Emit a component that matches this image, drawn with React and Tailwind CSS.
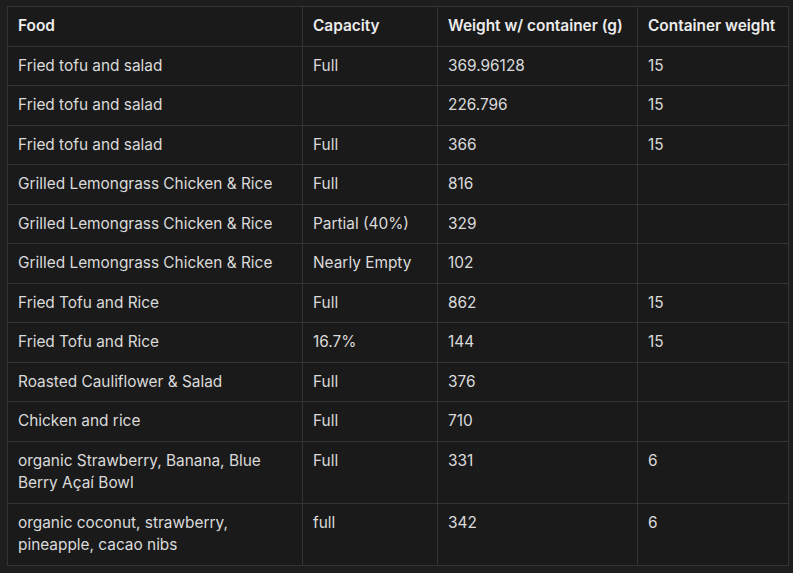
const rows = [
  ['Fried tofu and salad', 'Full', '369.96128', '15'],
  ['Fried tofu and salad', '', '226.796', '15'],
  ['Fried tofu and salad', 'Full', '366', '15'],
  ['Grilled Lemongrass Chicken & Rice', 'Full', '816', ''],
  ['Grilled Lemongrass Chicken & Rice', 'Partial (40%)', '329', ''],
  ['Grilled Lemongrass Chicken & Rice', 'Nearly Empty', '102', ''],
  ['Fried Tofu and Rice', 'Full', '862', '15'],
  ['Fried Tofu and Rice', '16.7%', '144', '15'],
  ['Roasted Cauliflower & Salad', 'Full', '376', ''],
  ['Chicken and rice', 'Full', '710', ''],
  ['organic Strawberry, Banana, Blue Berry Açaí Bowl', 'Full', '331', '6'],
  ['organic coconut, strawberry, pineapple, cacao nibs', 'full', '342', '6'],
];

const headers = ['Food', 'Capacity', 'Weight w/ container (g)', 'Container weight'];

function App() {
  return (
    <div
      className="min-h-screen bg-[#1e1e1e] pt-[6px] pl-[7px]"
      style={{ fontFamily: 'Inter, "Noto Sans", sans-serif' }}
    >
      <table className="table-fixed border-collapse bg-[#1a1a1a] text-[15.4px] leading-[22.5px] text-[#dadada]">
        <colgroup>
          <col className="w-[295px]" />
          <col className="w-[135px]" />
          <col className="w-[200px]" />
          <col className="w-[151px]" />
        </colgroup>
        <thead>
          <tr>
            {headers.map((h) => (
              <th
                key={h}
                className="border border-[#343434] px-[10px] py-2 text-left align-top font-semibold whitespace-nowrap text-[#ececec]"
              >
                {h}
              </th>
            ))}
          </tr>
        </thead>
        <tbody>
          {rows.map((row, i) => (
            <tr key={i}>
              {row.map((cell, j) => (
                <td key={j} className="border border-[#343434] px-[10px] py-2 align-top">
                  {cell}
                </td>
              ))}
            </tr>
          ))}
        </tbody>
      </table>
    </div>
  );
}

export default App;
